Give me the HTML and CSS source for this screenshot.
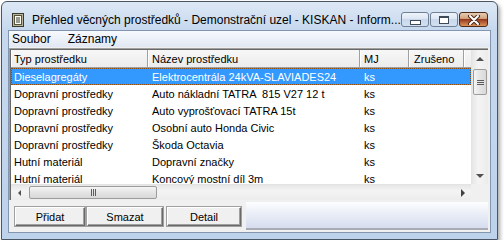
FILE: index.html
```html
<!DOCTYPE html>
<html lang="cs">
<head>
    <meta charset="UTF-8">
    <title>Přehled věcných prostředků</title>
    <link rel="stylesheet" href="styles.css">
</head>
<body>
    <div class="window">
        <div class="titlebar">
            <svg class="app-icon" width="12" height="14" viewBox="0 0 12 14">
                <rect x="0.5" y="0.5" width="11" height="13" fill="#b9b59a" stroke="#3b3a2c"/>
                <rect x="2.5" y="2.5" width="7" height="9" fill="#fbfbf4" stroke="#55533f"/>
                <line x1="4" y1="5" x2="8" y2="5" stroke="#3b3a2c"/>
                <line x1="4" y1="7" x2="8" y2="7" stroke="#3b3a2c"/>
                <line x1="4" y1="9" x2="8" y2="9" stroke="#3b3a2c"/>
            </svg>
            <span class="title">Přehled věcných prostředků - Demonstrační uzel - KISKAN - Inform...</span>
            <div class="caption-buttons">
                <span class="cap min"><span class="min-bar"></span></span>
                <span class="cap max"><span class="max-box"></span></span>
                <span class="cap close">
                    <svg width="14" height="10" viewBox="0 0 14 10">
                        <path d="M3 1 L11 9 M11 1 L3 9" stroke="#4a2c1c" stroke-width="4" stroke-linecap="round"/>
                        <path d="M3 1 L11 9 M11 1 L3 9" stroke="#fff" stroke-width="2" stroke-linecap="round"/>
                    </svg>
                </span>
            </div>
        </div>

        <div class="client">
            <div class="menubar">
                <span class="menu-item">Soubor</span>
                <span class="menu-item">Záznamy</span>
            </div>

            <div class="grid">
                <div class="grid-inner">
                    <div class="grid-main">
                        <div class="grid-view">
                            <div class="row header">
                                <span class="cell c1">Typ prostředku</span>
                                <span class="cell c2">Název prostředku</span>
                                <span class="cell c3">MJ</span>
                                <span class="cell c4">Zrušeno</span>
                                <span class="cell c5"></span>
                            </div>
                            <div class="row selected">
                                <span class="cell c1">Dieselagregáty</span>
                                <span class="cell c2">Elektrocentrála 24kVA-SLAVIADES24</span>
                                <span class="cell c3">ks</span>
                                <span class="cell c4"></span>
                            </div>
                            <div class="row">
                                <span class="cell c1">Dopravní prostředky</span>
                                <span class="cell c2">Auto nákladní TATRA &nbsp;815 V27 12 t</span>
                                <span class="cell c3">ks</span>
                                <span class="cell c4"></span>
                            </div>
                            <div class="row">
                                <span class="cell c1">Dopravní prostředky</span>
                                <span class="cell c2">Auto vyprošťovací TATRA 15t</span>
                                <span class="cell c3">ks</span>
                                <span class="cell c4"></span>
                            </div>
                            <div class="row">
                                <span class="cell c1">Dopravní prostředky</span>
                                <span class="cell c2">Osobní auto Honda Civic</span>
                                <span class="cell c3">ks</span>
                                <span class="cell c4"></span>
                            </div>
                            <div class="row">
                                <span class="cell c1">Dopravní prostředky</span>
                                <span class="cell c2">Škoda Octavia</span>
                                <span class="cell c3">ks</span>
                                <span class="cell c4"></span>
                            </div>
                            <div class="row">
                                <span class="cell c1">Hutní materiál</span>
                                <span class="cell c2">Dopravní značky</span>
                                <span class="cell c3">ks</span>
                                <span class="cell c4"></span>
                            </div>
                            <div class="row">
                                <span class="cell c1">Hutní materiál</span>
                                <span class="cell c2">Koncový mostní díl 3m</span>
                                <span class="cell c3">ks</span>
                                <span class="cell c4"></span>
                            </div>
                        </div>

                        <div class="vscroll">
                            <span class="sb-btn"><span class="arrow up"></span></span>
                            <span class="vthumb"><span class="grip-h"></span></span>
                            <span class="sb-track"></span>
                            <span class="sb-btn"><span class="arrow down"></span></span>
                        </div>
                    </div>

                    <div class="hscroll-row">
                        <div class="hscroll">
                            <span class="sb-btn h"><span class="arrow left"></span></span>
                            <span class="hthumb"><span class="grip-v"></span></span>
                            <span class="sb-track"></span>
                            <span class="sb-btn h"><span class="arrow right"></span></span>
                        </div>
                        <div class="corner"></div>
                    </div>
                </div>
            </div>

            <div class="buttonbar">
                <button class="btn add">Přidat</button>
                <button class="btn remove">Smazat</button>
                <button class="btn detail">Detail</button>
                <div class="status"></div>
            </div>
        </div>
    </div>
</body>
</html>
```

FILE: styles.css
```css
body {
    margin: 0;
    background-color: #fff;
    font-family: "Liberation Sans", Arial, sans-serif;
    color: #000;
}

.window {
    margin: 1px 0 0 1px;
    width: 483px;
    padding: 0 6px 6px;
    border: 1px solid #4b5664;
    border-radius: 6px 6px 0 0;
    background: linear-gradient(#dde8f5, #c6d8ee 28px, #bdd3eb);
    box-shadow: 2px 3px 4px rgba(0, 0, 0, 0.35);
}

/* title bar */
.titlebar {
    height: 28px;
    box-sizing: border-box;
    padding-top: 7px;
    display: flex;
    align-items: center;
}
.app-icon {
    margin-left: 4px;
    margin-right: 8px;
    flex: none;
}
.title {
    font-size: 12px;
    color: #000;
    white-space: nowrap;
    flex: 1;
}
.caption-buttons {
    display: flex;
    gap: 1px;
    margin-right: 3px;
}
.cap {
    width: 28px;
    height: 15px;
    border: 1px solid #6f7f94;
    border-radius: 3px;
    box-sizing: border-box;
    background: linear-gradient(#eef3fa, #dce6f3 45%, #c9d8ec 50%, #d3e0f1);
    display: flex;
    align-items: center;
    justify-content: center;
}
.min-bar {
    width: 9px;
    height: 3px;
    margin-top: 5px;
    background: #fff;
    border: 1px solid #3f4a58;
}
.max-box {
    width: 8px;
    height: 5px;
    background: #fff;
    border: 1px solid #3f4a58;
    border-top-width: 2px;
}
.cap.close {
    width: 29px;
    border-color: #4c2a1a;
    background: linear-gradient(#e6cdb4, #d3a37c 42%, #93391f 50%, #a9502d 62%, #dd9459);
}

/* client area */
.client {
    border: 1px solid #8496ad;
    background-color: #f0f0f0;
}
.menubar {
    height: 16px;
    display: flex;
    align-items: center;
    padding-left: 3px;
    font-size: 12px;
    background: linear-gradient(#f7f9fd, #e1e8f3);
}
.menu-item {
    margin-right: 17px;
}

/* list view */
.grid {
    margin: 1px 2px 0 0;
    border-top: 1px solid #a0a0a0;
    border-left: 1px solid #a0a0a0;
}
.grid-inner {
    border-top: 1px solid #696969;
    border-left: 1px solid #696969;
}
.grid-main {
    display: flex;
    height: 134px;
}
.grid-view {
    flex: 1;
    overflow: hidden;
    background-color: #fff;
    font-size: 11px;
}
.row {
    display: flex;
    height: 17px;
    align-items: center;
    white-space: nowrap;
}
.cell {
    box-sizing: border-box;
    padding-left: 4px;
    overflow: hidden;
    flex: none;
}
.c1 { width: 137px; padding-left: 3px; }
.c2 { width: 212px; }
.c3 { width: 49px; }
.c4 { width: 55px; padding-left: 5px; }
.c5 { flex: 1; }

.row.header {
    height: 18px;
    background: linear-gradient(#f7f7f7, #ececec);
    border-bottom: 1px solid #a0a0a0;
    box-sizing: border-box;
}
.row.header .cell {
    height: 100%;
    display: flex;
    align-items: center;
    border-right: 1px solid #a0a0a0;
    box-shadow: inset 1px 0 #fff;
}
.row.header .c5 {
    border-right: none;
}
.row.selected {
    background-color: #3399ff;
    color: #fff;
    outline: 1px dotted #8a4a10;
    outline-offset: -1px;
}

/* scrollbars */
.vscroll {
    width: 17px;
    display: flex;
    flex-direction: column;
    background: linear-gradient(90deg, #e6e6e6, #f4f4f4 40%, #ececec);
    border-left: 1px solid #e3e3e3;
    box-sizing: border-box;
}
.sb-btn {
    height: 17px;
    flex: none;
    display: flex;
    align-items: center;
    justify-content: center;
}
.sb-btn.h {
    width: 17px;
    height: 100%;
}
.sb-track {
    flex: 1;
}
.arrow {
    width: 0;
    height: 0;
    border: 4px solid transparent;
}
.arrow.up { border-bottom: 4px solid #505050; border-top: none; }
.arrow.down { border-top: 4px solid #505050; border-bottom: none; }
.arrow.left { border-right: 3px solid #505050; border-left: none; border-width: 3px; }
.arrow.right { border-left: 4px solid #404040; border-right: none; }

.vthumb {
    margin: 2px 1px 0 1px;
    height: 24px;
    flex: none;
    border: 1px solid #9c9c9c;
    border-radius: 2px;
    background: linear-gradient(90deg, #f5f5f5, #e4e4e4 50%, #d8d8d8);
    display: flex;
    align-items: center;
    justify-content: center;
}
.grip-h {
    width: 7px;
    height: 5px;
    background: repeating-linear-gradient(#5c5c5c 0 1px, transparent 1px 2px);
}
.hscroll-row {
    display: flex;
    height: 16px;
}
.hscroll {
    flex: 1;
    display: flex;
    background: linear-gradient(#e6e6e6, #f4f4f4 40%, #ececec);
    border-top: 1px solid #e3e3e3;
}
.hthumb {
    width: 128px;
    margin: 1px 0 1px 1px;
    border: 1px solid #9c9c9c;
    border-radius: 2px;
    background: linear-gradient(#f5f5f5, #e4e4e4 50%, #d8d8d8);
    display: flex;
    align-items: center;
    justify-content: center;
    box-sizing: border-box;
}
.grip-v {
    width: 5px;
    height: 7px;
    background: repeating-linear-gradient(90deg, #5c5c5c 0 1px, transparent 1px 2px);
}
.corner {
    width: 17px;
    background-color: #f0f0f0;
}

/* buttons */
.buttonbar {
    display: flex;
    align-items: flex-start;
    height: 32px;
    padding-top: 2px;
    box-sizing: border-box;
}
.btn {
    margin-top: 5px;
    height: 19px;
    padding: 0;
    font-family: "Liberation Sans", Arial, sans-serif;
    font-size: 11px;
    color: #000;
    background-color: #f0f0f0;
    border: 1px solid;
    border-color: #fff #696969 #696969 #fff;
    box-shadow: inset -1px -1px #a0a0a0;
    outline: 1px solid #a0a0a0;
}
.btn.add { width: 70px; margin-left: 6px; }
.btn.remove { width: 76px; margin-left: 2px; }
.btn.detail { width: 74px; margin-left: 4px; }
.status {
    flex: 1;
    height: 28px;
    margin: 0 2px 0 5px;
    background: linear-gradient(#fcfdfe, #eaeef7 45%, #d6ddef);
    border-bottom: 2px solid #a8aab4;
    box-sizing: border-box;
}
```
